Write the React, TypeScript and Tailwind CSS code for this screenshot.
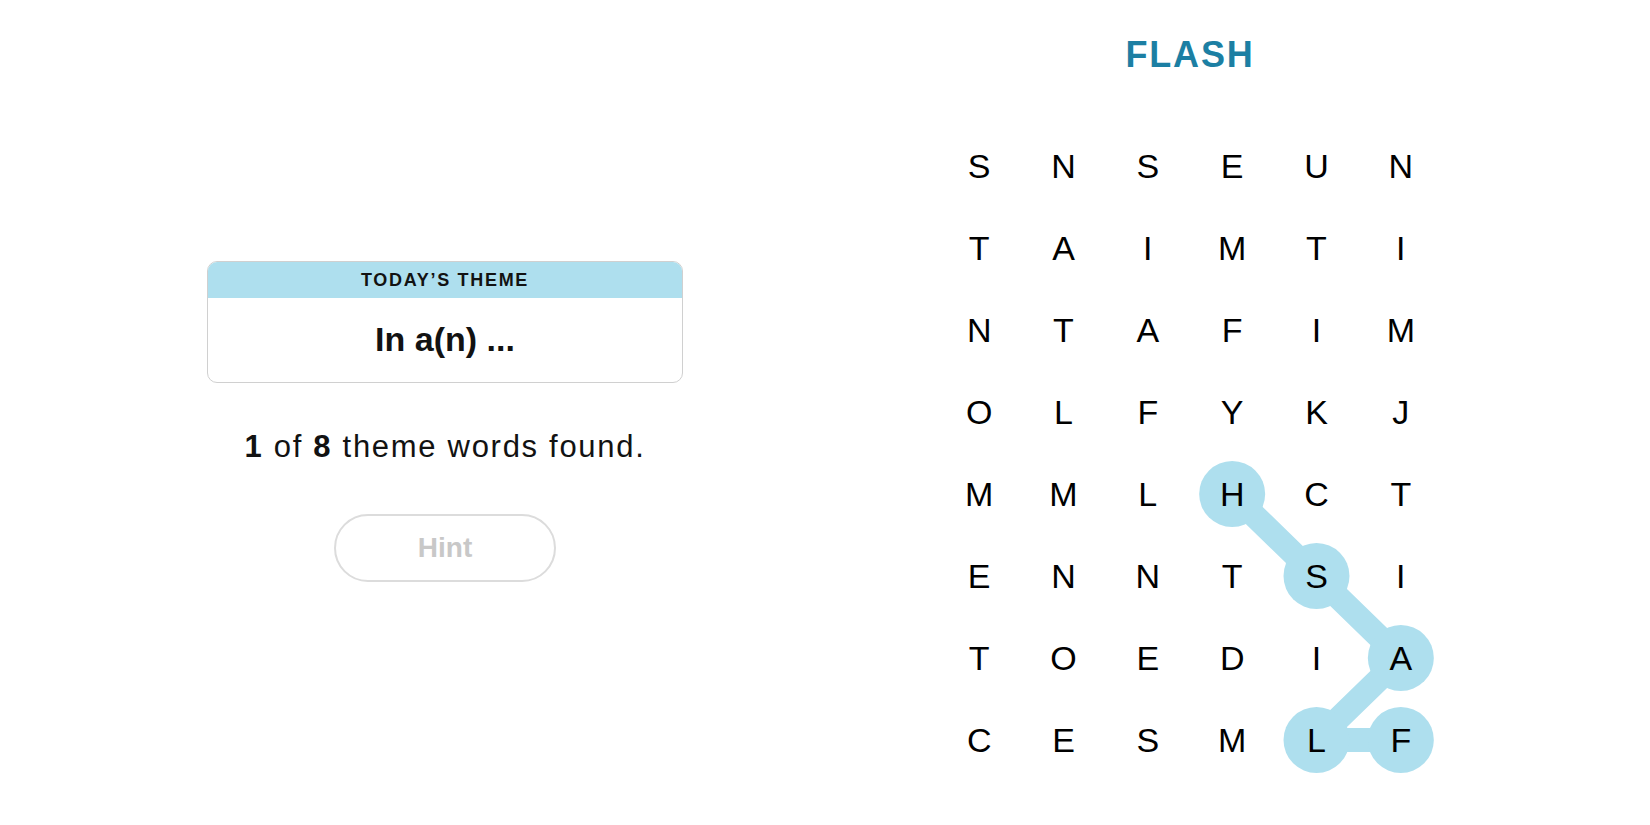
import React from "react";

const GRID = [
  ["S", "N", "S", "E", "U", "N"],
  ["T", "A", "I", "M", "T", "I"],
  ["N", "T", "A", "F", "I", "M"],
  ["O", "L", "F", "Y", "K", "J"],
  ["M", "M", "L", "H", "C", "T"],
  ["E", "N", "N", "T", "S", "I"],
  ["T", "O", "E", "D", "I", "A"],
  ["C", "E", "S", "M", "L", "F"],
];

const CW = 506 / 6;
const RH = 82;
const PATH: [number, number][] = [
  [3, 4],
  [4, 5],
  [5, 6],
  [4, 7],
  [5, 7],
];

export default function App() {
  const pts = PATH.map(([c, r]) => [CW / 2 + c * CW, RH / 2 + r * RH]);
  return (
    <div
      className="w-[1650px] h-[825px] bg-white flex justify-center gap-[254px] overflow-hidden"
      style={{ fontFamily: '"Liberation Sans", Arial, sans-serif' }}
    >
      <div className="w-[476px] pt-[261px] flex flex-col items-center">
        <div className="w-[476px] rounded-[10px] border border-[#d0d0d0] overflow-hidden">
          <div className="h-[36px] bg-[#aedfee] text-center text-[18px] leading-[36px] font-semibold tracking-[1.7px] text-[#121212]">
            TODAY’S THEME
          </div>
          <div className="h-[84px] flex items-center justify-center text-[34px] font-bold text-[#121212] pb-[2px]">
            In a(n) ...
          </div>
        </div>
        <div className="mt-[44px] text-[31px] leading-[40px] text-[#121212] tracking-[1.7px]">
          <span className="font-bold">1</span> of <span className="font-bold">8</span> theme words found.
        </div>
        <div className="mt-[47px] w-[222px] h-[68px] rounded-full border-2 border-[#dcdcdc] flex items-center justify-center text-[28px] font-bold text-[#c8c8c8]">
          Hint
        </div>
      </div>
      <div className="w-[506px] flex flex-col items-center">
        <div className="mt-[37px] h-[36px] text-[36px] leading-[36px] font-bold text-[#1c7fa3] tracking-[1.8px]">
          FLASH
        </div>
        <div className="mt-[52px] relative w-[506px]">
          <svg
            className="absolute left-0 top-0"
            width={506}
            height={656}
            viewBox="0 0 506 656"
          >
            <polyline
              points={pts.map((p) => p.join(",")).join(" ")}
              fill="none"
              stroke="#aedfee"
              strokeWidth={24}
              strokeLinejoin="round"
            />
            {pts.map(([x, y], i) => (
              <circle key={i} cx={x} cy={y} r={33} fill="#aedfee" />
            ))}
          </svg>
          <div className="relative grid grid-cols-6">
            {GRID.flat().map((l, i) => (
              <div
                key={i}
                className="h-[82px] flex items-center justify-center text-[34px] text-black"
              >
                {l}
              </div>
            ))}
          </div>
        </div>
      </div>
    </div>
  );
}
